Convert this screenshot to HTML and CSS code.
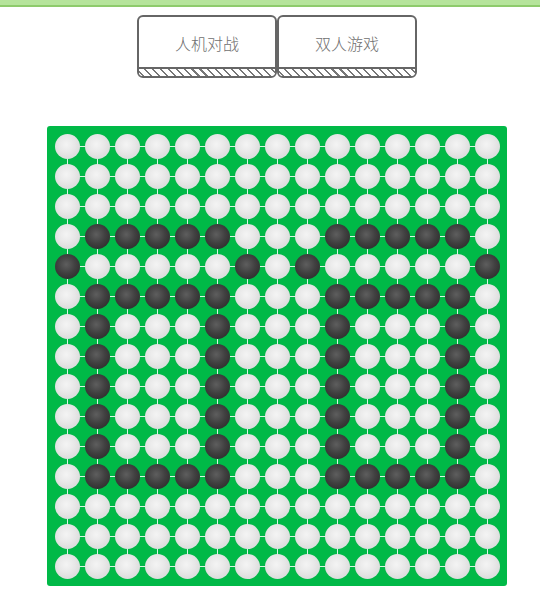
FILE: index.html
```html
<!DOCTYPE html>
<html lang="zh">
<head>
<meta charset="utf-8">
<link rel="stylesheet" href="styles.css">
</head>
<body>
<div class="topbar"></div>
<nav class="modes">
  <button class="mode"><span class="label">人机对战</span><span class="hatch"></span></button>
  <button class="mode"><span class="label">双人游戏</span><span class="hatch"></span></button>
</nav>
<div class="board"><div class="grid" id="grid"></div></div>
<script src="app.js"></script>
</body>
</html>
```
FILE: styles.css
```css
html, body { margin: 0; padding: 0; background: #fff; }
body { font-family: "Noto Sans CJK SC", "Noto Sans", sans-serif; }
.topbar { height: 5px; background: #b6e49c; border-bottom: 2px solid #8ecb6c; }
.modes { display: flex; padding-left: 137px; margin-top: 8px; }
.mode {
  width: 140px; height: 63px; padding: 0; margin: 0;
  border: 2px solid #666; border-radius: 6px; background: #fff;
  display: flex; flex-direction: column; overflow: hidden;
  font-family: inherit; cursor: pointer;
}
.label { flex: 1; display: flex; align-items: center; justify-content: center; font-size: 16px; font-weight: 300; color: #707070; padding-top: 1px; }
.hatch {
  height: 7px; border-top: 2px solid #666;
  background: repeating-linear-gradient(45deg, #fff 0 2.5px, #777 2.5px 4px, #fff 4px 5.6px);
}
.board {
  width: 450px; height: 450px; padding: 5px; margin: 48px 0 0 47px;
  background: #00b947; border-radius: 3px;
}
.grid {
  position: relative; display: grid;
  grid-template-columns: repeat(15, 30px); grid-template-rows: repeat(15, 30px);
}
.grid::before {
  content: ""; position: absolute; top: 15px; left: 15px; width: 421px; height: 421px;
  background-image:
    linear-gradient(to right, rgba(255,255,255,0.85) 1px, transparent 1px),
    linear-gradient(to bottom, rgba(255,255,255,0.85) 1px, transparent 1px);
  background-size: 30px 30px;
}
.cell { position: relative; display: flex; align-items: center; justify-content: center; }
.stone { width: 25px; height: 25px; border-radius: 50%; }
.white { background: radial-gradient(circle at 45% 42%, #f4f4f4 0, #e8e8e8 40%, #d2d2d2 100%); }
.black { background: radial-gradient(circle at 45% 42%, #5e5e5e 0, #404040 45%, #242424 100%); }
```
FILE: app.js
```js
var blacks = {};
function add(r, c) { blacks[r + "," + c] = 1; }
[3, 5, 11].forEach(function (r) { [1,2,3,4,5,9,10,11,12,13].forEach(function (c) { add(r, c); }); });
[0, 6, 8, 14].forEach(function (c) { add(4, c); });
for (var r = 6; r <= 10; r++) { [1, 5, 9, 13].forEach(function (c) { add(r, c); }); }
var g = document.getElementById("grid");
var html = "";
for (var i = 0; i < 15; i++) for (var j = 0; j < 15; j++) {
  html += '<div class="cell"><div class="stone ' + (blacks[i + "," + j] ? "black" : "white") + '"></div></div>';
}
g.innerHTML = html;
```
